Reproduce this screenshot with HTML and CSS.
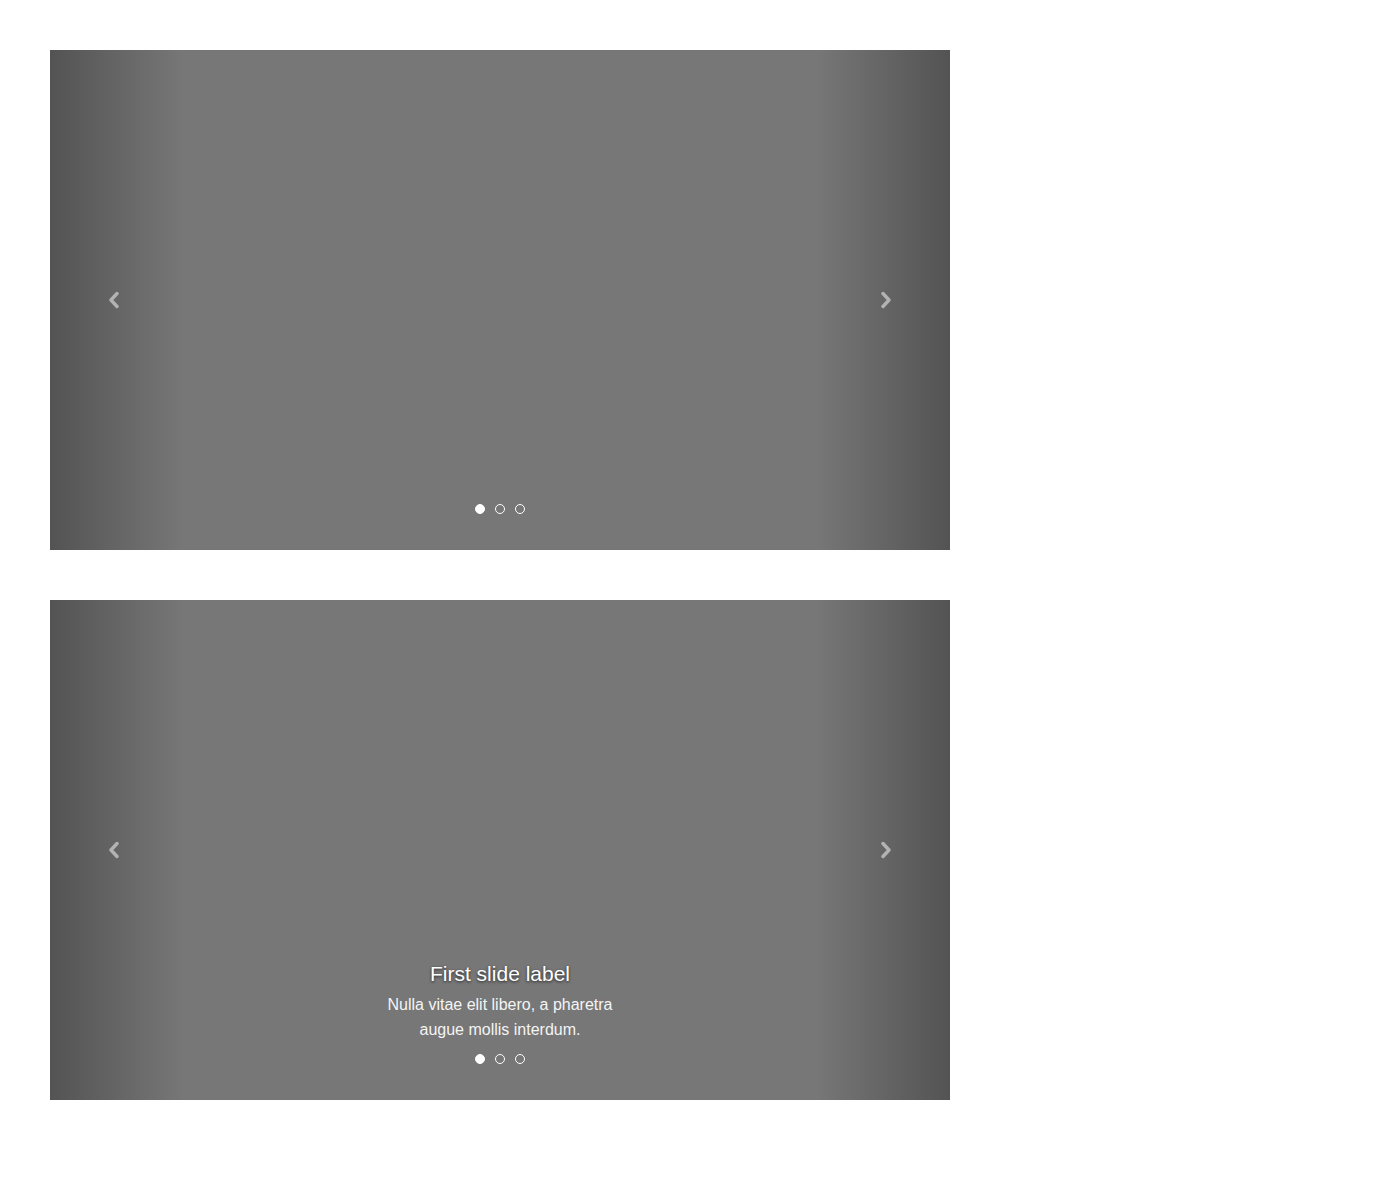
FILE: index.html
```html
<!DOCTYPE html>
<html>
<head>
<meta charset="utf-8">
<link rel="stylesheet" href="styles.css">
</head>
<body>
<div class="page">
  <div class="carousel">
    <div class="ctrl ctrl-left">
      <svg width="12" height="18" viewBox="0 0 12 18"><polyline points="9,2.5 3,9 9,15.5" fill="none" stroke="#fff" stroke-width="3.4" stroke-linecap="round" stroke-linejoin="round"/></svg>
    </div>
    <div class="ctrl ctrl-right">
      <svg width="12" height="18" viewBox="0 0 12 18"><polyline points="3,2.5 9,9 3,15.5" fill="none" stroke="#fff" stroke-width="3.4" stroke-linecap="round" stroke-linejoin="round"/></svg>
    </div>
    <div class="bottom">
      <div class="dots"><span class="dot active"></span><span class="dot"></span><span class="dot"></span></div>
    </div>
  </div>
  <div class="carousel">
    <div class="ctrl ctrl-left">
      <svg width="12" height="18" viewBox="0 0 12 18"><polyline points="9,2.5 3,9 9,15.5" fill="none" stroke="#fff" stroke-width="3.4" stroke-linecap="round" stroke-linejoin="round"/></svg>
    </div>
    <div class="ctrl ctrl-right">
      <svg width="12" height="18" viewBox="0 0 12 18"><polyline points="3,2.5 9,9 3,15.5" fill="none" stroke="#fff" stroke-width="3.4" stroke-linecap="round" stroke-linejoin="round"/></svg>
    </div>
    <div class="bottom">
      <div class="caption">
        <h3 class="cap-title">First slide label</h3>
        <p class="cap-text">Nulla vitae elit libero, a pharetra augue mollis interdum.</p>
      </div>
      <div class="dots"><span class="dot active"></span><span class="dot"></span><span class="dot"></span></div>
    </div>
  </div>
</div>
</body>
</html>
```

FILE: styles.css
```css
html, body { margin: 0; padding: 0; background: #fff; }
body { font-family: "Liberation Sans", Arial, sans-serif; }
.page { padding: 50px; display: flex; flex-direction: column; gap: 50px; }
.carousel {
  position: relative;
  width: 900px;
  height: 500px;
  background: #777;
  display: flex;
  flex-direction: column;
  justify-content: flex-end;
  align-items: center;
  overflow: hidden;
}
.ctrl {
  position: absolute;
  top: 0;
  bottom: 0;
  width: 135px;
  display: flex;
  align-items: center;
  justify-content: center;
}
.ctrl svg { opacity: 0.5; }
.ctrl-left { left: 0; background: linear-gradient(to right, rgba(0,0,0,0.3), rgba(0,0,0,0)); padding-right: 7px; box-sizing: border-box; }
.ctrl-right { right: 0; background: linear-gradient(to left, rgba(0,0,0,0.3), rgba(0,0,0,0)); padding-left: 7px; box-sizing: border-box; }
.bottom {
  position: relative;
  display: flex;
  flex-direction: column;
  align-items: center;
  padding-bottom: 36px;
}
.caption {
  width: 260px;
  text-align: center;
  color: #fff;
  margin-bottom: 12px;
}
.cap-title {
  margin: 0 0 6px;
  font-size: 21px;
  font-weight: normal;
  line-height: 24px;
  text-shadow: 0 1px 3px rgba(0,0,0,0.7);
}
.cap-text {
  margin: 0;
  font-size: 16px;
  line-height: 25px;
  color: #f4f4f4;
}
.dots { display: flex; gap: 10px; }
.dot {
  width: 10px;
  height: 10px;
  box-sizing: border-box;
  border: 1px solid #fff;
  border-radius: 50%;
}
.dot.active { background: #fff; }
```
